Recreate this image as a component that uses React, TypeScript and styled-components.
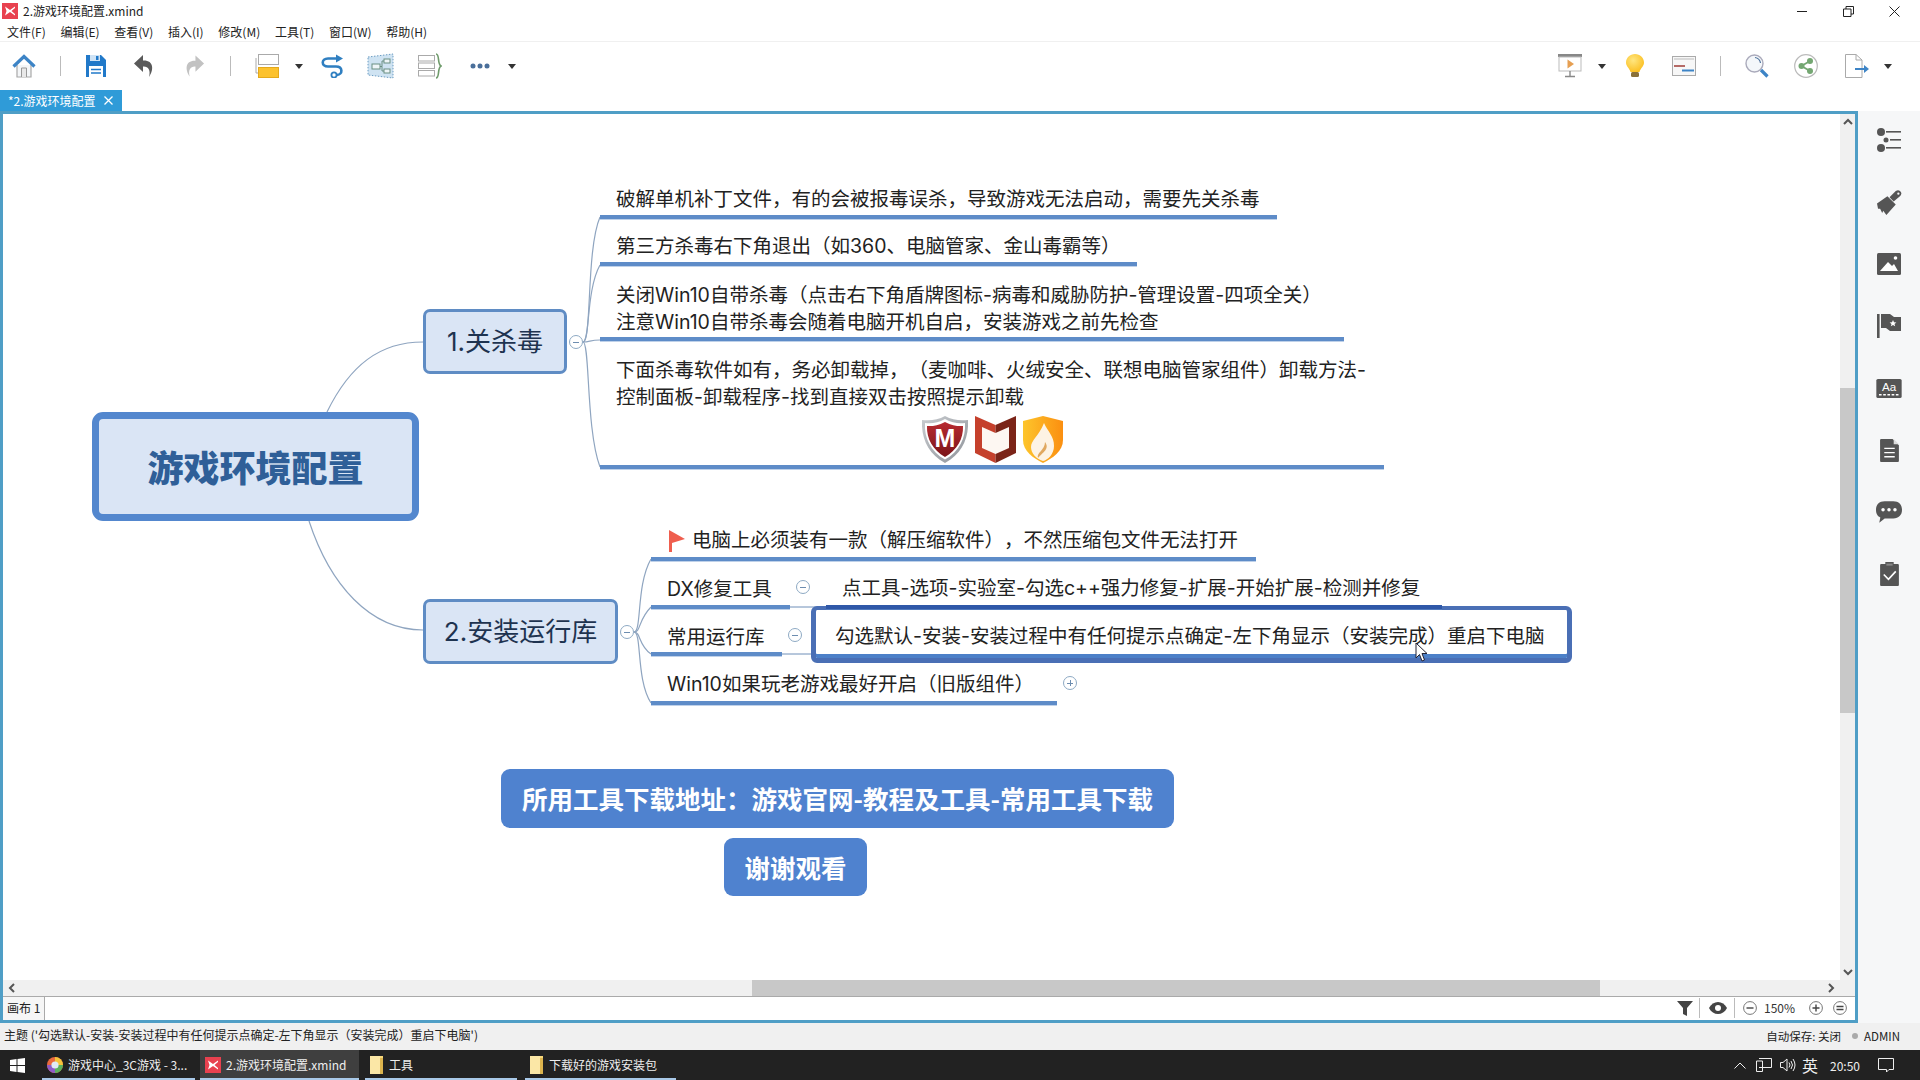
import React from "react";
import styled, { createGlobalStyle, css } from "styled-components";

const Global = createGlobalStyle`
  html, body { margin: 0; padding: 0; background: #fff; overflow: hidden; }
  body { font-family: "Noto Sans CJK SC", "Noto Sans", sans-serif; text-spacing-trim: space-all; }
  * { box-sizing: border-box; }
  svg { display: block; flex: none; }
`;
const MAP_FONT = `"Inter", "Noto Sans CJK SC", sans-serif`;

const Shell = styled.div`
  width: 1920px; height: 1080px; display: flex; flex-direction: column; background: #fff; overflow: hidden;
`;
const TitleBar = styled.div`
  height: 22px; display: flex; align-items: center; padding: 0 0 0 2px; flex: none;
`;
const TitleText = styled.span`
  font-size: 12px; line-height: 20px; color: #222; margin-left: 5px;
`;
const WindowControls = styled.div`
  margin-left: auto; display: flex; align-items: center; gap: 35px; padding-right: 20px;
`;
const MenuBar = styled.div`
  height: 20px; display: flex; align-items: center; gap: 14.7px; padding: 0 0 0 7px; flex: none; border-bottom: 1px solid #f0f0f0;
`;
const MenuItem = styled.span`
  font-size: 12px; line-height: 18px; color: #222;
`;
const Toolbar = styled.div`
  height: 48px; flex: none; display: flex; align-items: center; padding: 0 28px 0 12px;
`;
const ToolSvg = styled.svg<{ $gap?: number }>`
  margin-left: ${p => p.$gap ?? 0}px;
`;
const ToolSep = styled.div<{ $gap: number }>`
  width: 1px; height: 20px; background: #bbb; margin-left: ${p => p.$gap}px;
`;
const Caret = styled.div<{ $gap: number }>`
  width: 0; height: 0; margin-left: ${p => p.$gap}px;
  border-left: 4px solid transparent; border-right: 4px solid transparent; border-top: 5px solid #333;
`;
const ToolSpacer = styled.div`flex: 1;`;
const TabStrip = styled.div`
  height: 21px; flex: none; display: flex;
`;
const Tab = styled.div`
  width: 122px; height: 21px; background: #2f9bd8; color: #fff; font-size: 12px; line-height: 21px;
  padding-left: 8px; display: flex; align-items: center; justify-content: space-between; padding-right: 9px;
`;
const Main = styled.div`
  flex: 1; display: flex; min-height: 0;
`;
const Frame = styled.div`
  width: 1858px; height: 912px; border: 3px solid #4f9ec6; display: flex; flex-direction: column; background: #fff;
`;
const CanvasRow = styled.div`
  height: 866px; display: flex; flex: none;
`;
const Canvas = styled.div`
  position: relative; flex: 1; overflow: hidden; background: #fff;
`;
const VScroll = styled.div`
  width: 15px; display: flex; flex-direction: column; align-items: center; background: #f0f0f0; position: relative;
`;
const VThumb = styled.div`
  width: 15px; height: 325px; margin-top: 258px; background: #c8c8c8; flex: none;
`;
const ScrollArrow = styled.svg`
  margin: 4px 0;
`;
const VBottomArrow = styled(ScrollArrow)`
  margin-top: auto;
`;
const HScroll = styled.div`
  height: 17px; flex: none; display: flex; align-items: center; background: #f0f0f0; padding: 0 20px 0 5px;
  border-bottom: 1px solid #aaa;
`;
const HThumb = styled.div`
  width: 848px; height: 16px; background: #c8c8c8; margin-left: 736px;
`;
const HRight = styled.div`
  margin-left: auto;
`;
const SheetBar = styled.div`
  flex: 1; display: flex; align-items: center; background: #fff; padding: 0 8px 2px 0;
`;
const SheetTab = styled.div`
  width: 42px; height: 23px; font-size: 12px; line-height: 21px; color: #222; padding-left: 4px; border-right: 1px solid #aaa;
  background: #f6f6f6; margin-bottom: -2px;
`;
const ZoomText = styled.span`
  font-size: 12px; line-height: 16px; color: #333; margin-left: 7px; width: 38px;
`;
const Sidebar = styled.div`
  width: 62px; flex: none; height: 912px; display: flex; flex-direction: column; align-items: center; gap: 38px; padding-top: 17px;
  background: #f6f7f8;
`;
const SideSlot = styled.div`
  width: 26px; height: 24px; display: flex; align-items: center; justify-content: center;
`;
const StatusBar = styled.div`
  height: 27px; flex: none; background: #f0f0f0; display: flex; align-items: center; padding: 0 20px 2px 4px; font-size: 12px; color: #222;
`;
const StatusLeft = styled.span`
  line-height: 20px; margin-bottom: 2px;
`;
const StatusRight = styled.div`
  margin-left: auto; display: flex; align-items: center; gap: 6px; line-height: 20px; font-size: 11.5px;
`;
const StatusDot = styled.span`
  width: 6px; height: 6px; border-radius: 50%; background: #aaa; margin-left: 5px;
`;
const Taskbar = styled.div`
  height: 30px; flex: none; background: #222; display: flex; align-items: stretch; color: #eee; font-size: 12px;
`;
const StartCell = styled.div`
  width: 42px; display: flex; align-items: center; justify-content: center; padding-right: 7px;
`;
const TaskItem = styled.div<{ $w: number; $active?: boolean; $gap?: number }>`
  width: ${p => p.$w}px; margin-left: ${p => p.$gap ?? 0}px; display: flex; align-items: center; gap: 5px; padding-left: 5px;
  background: ${p => (p.$active ? "#3f3f3f" : "transparent")};
  border-bottom: 2px solid #a9c9e8; line-height: 28px; white-space: nowrap; padding-top: 1px;
`;
const Tray = styled.div`
  margin-left: auto; display: flex; align-items: center; padding-right: 26px;
`;
const TrayText = styled.span<{ $gap: number; $size: number }>`
  font-size: ${p => p.$size}px; margin-left: ${p => p.$gap}px; color: #eee;
`;
const TrayIcon = styled.svg<{ $gap: number }>`
  margin-left: ${p => p.$gap}px;
`;

/* ---- free canvas: nodes of the mind map ---- */
const OX = 3;
const OY = 114;
const place = css<{ $x: number; $y: number }>`
  position: absolute; left: ${p => p.$x - OX}px; top: ${p => p.$y - OY}px;
`;
const Wires = styled.svg`
  position: absolute; left: ${-OX}px; top: ${-OY}px; pointer-events: none;
`;
const RootTopic = styled.div<{ $x: number; $y: number }>`
  ${place}
  width: 327px; height: 109px; background: #dae5f5; border: 7px solid #5387ce; border-radius: 11px;
  display: flex; align-items: center; justify-content: center; padding-bottom: 2px;
  font-size: 36px; font-weight: 900; color: #2f5f98; line-height: 44px;
`;
const MainTopic = styled.div<{ $x: number; $y: number; $w: number }>`
  ${place}
  width: ${p => p.$w}px; height: 65px; background: #dae5f5; border: 3.5px solid #5f8cc4; border-radius: 7px;
  display: flex; align-items: center; justify-content: center;
  font-family: ${MAP_FONT}; font-size: 26px; color: #1e3350; line-height: 34px;
`;
const SubTopic = styled.div<{ $x: number; $y: number; $w: number; $h: number; $pad?: number; $dark?: boolean }>`
  ${place}
  width: ${p => p.$w}px; height: ${p => p.$h}px;
  border-bottom: 4px solid ${p => (p.$dark ? "#2f58a8" : "#5e8cc8")};
  box-shadow: 0 1px 0 rgba(94, 140, 200, 0.4);
  padding-left: ${p => p.$pad ?? 16}px; padding-top: 3px;
  display: flex; align-items: center;
  font-family: ${MAP_FONT}; font-size: 19.5px; line-height: 27px; color: #222; white-space: nowrap;
`;
const SubBlock = styled.div<{ $x: number; $y: number; $w: number; $h: number }>`
  ${place}
  width: ${p => p.$w}px; height: ${p => p.$h}px; border-bottom: 4px solid #5e8cc8;
  box-shadow: 0 1px 0 rgba(94, 140, 200, 0.4);
  display: flex; flex-direction: column;
  font-family: ${MAP_FONT}; font-size: 19.5px; line-height: 27px; color: #222; white-space: nowrap;
`;
const BlockText = styled.div`
  padding: 2px 0 0 16px;
`;
const LogoRow = styled.div`
  display: flex; justify-content: center; gap: 7px; margin-top: 5px;
`;
const SelectedTopic = styled.div<{ $x: number; $y: number }>`
  ${place}
  width: 761px; height: 57px; border: solid #4a6fb5; border-width: 4px 5px 5px 5px; border-radius: 6px;
  box-shadow: inset 0 -4px 0 #4c80c8;
  display: flex; align-items: center; padding: 4px 0 0 19px;
  font-family: ${MAP_FONT}; font-size: 19.5px; line-height: 27px; color: #222; white-space: nowrap;
`;
const Flag = styled.svg`
  margin-right: 6px; margin-left: -1px;
`;
const Fold = styled.div<{ $x: number; $y: number; $plus?: boolean }>`
  ${place}
  width: 14px; height: 14px; margin: -7px 0 0 -7px; border-radius: 50%; background: #fff; border: 1px solid #8eaac4;
  &::before { content: ""; position: absolute; left: 3px; top: 5.5px; width: 6px; height: 1px; background: #6d8db0; }
  ${p => p.$plus && css`
    &::after { content: ""; position: absolute; left: 5.5px; top: 3px; width: 1px; height: 6px; background: #6d8db0; }
  `}
`;
const Banner = styled.div<{ $x: number; $y: number; $w: number; $h: number }>`
  ${place}
  width: ${p => p.$w}px; height: ${p => p.$h}px; background: #4f82cf; border-radius: 9px;
  display: flex; align-items: center; justify-content: center; padding-bottom: 1px;
  font-size: 25.5px; font-weight: 700; line-height: 34px; color: #fff; white-space: nowrap;
`;
const Cursor = styled.svg<{ $x: number; $y: number }>`
  ${place}
`;

const XLogo = ({ s = 16 }: { s?: number }) => (
  <svg width={s} height={s} viewBox="0 0 16 16">
    <rect width="16" height="16" fill="#e8414f" />
    <path d="M3 3.5 L8 7 L13 3.5 L13 5 L9.5 8 L13 11 L13 12.5 L8 9 L3 12.5 L4.5 8 Z" fill="#fff" />
  </svg>
);
const Folder = () => (
  <svg width="14" height="20" viewBox="0 0 14 20">
    <path d="M0 1 H9 L13 1 V19 H0 Z" fill="#f7d77a" />
    <path d="M0 1 H10 V19 H0 Z" fill="#fbe7a6" />
    <rect x="10" y="3" width="3" height="16" fill="#dcb44e" />
  </svg>
);
const Chev = ({ d }: { d: string }) => (
  <ScrollArrow width="10" height="8" viewBox="0 0 10 8">
    <path d={d} fill="none" stroke="#555" strokeWidth="2" />
  </ScrollArrow>
);

const wirePaths = [
  "M327 412 C350 365 380 342 423 342",
  "M309 521 C330 585 370 630 423 630",
  "M583 342 C592 342 586 250 600 217",
  "M583 342 C590 342 586 290 600 265",
  "M583 342 C590 342 590 340 600 340",
  "M583 342 C590 342 586 430 600 467",
  "M634 632 C642 632 636 585 651 559",
  "M634 632 C641 632 638 620 651 607",
  "M634 632 C641 632 638 645 651 654",
  "M634 632 C642 632 636 680 651 703",
];

export default function App() {
  return (
    <Shell>
      <Global />
      <TitleBar>
        <XLogo />
        <TitleText>2.游戏环境配置.xmind</TitleText>
        <WindowControls>
          <svg width="11" height="11" viewBox="0 0 11 11"><path d="M0 5.5 H10" stroke="#222" strokeWidth="1" /></svg>
          <svg width="11" height="11" viewBox="0 0 11 11"><path d="M0.5 3 H8 V10.5 H0.5 Z M3 3 V0.5 H10.5 V8 H8" fill="none" stroke="#222" /></svg>
          <svg width="11" height="11" viewBox="0 0 11 11"><path d="M0.5 0.5 L10.5 10.5 M10.5 0.5 L0.5 10.5" stroke="#222" /></svg>
        </WindowControls>
      </TitleBar>
      <MenuBar>
        {["文件(F)", "编辑(E)", "查看(V)", "插入(I)", "修改(M)", "工具(T)", "窗口(W)", "帮助(H)"].map(m => (
          <MenuItem key={m}>{m}</MenuItem>
        ))}
      </MenuBar>
      <Toolbar>
        <ToolSvg width="24" height="24" viewBox="0 0 24 24">
          <path d="M5 11 V23 H19 V11" fill="#f4f6f8" stroke="#a8a8a8" strokeWidth="1.2" />
          <path d="M9.5 23 V14 H14.5 V23" fill="#e8e8e8" stroke="#999" />
          <path d="M1.5 12.5 L12 2.5 L22.5 12.5" fill="none" stroke="#3d84c6" strokeWidth="3.2" />
        </ToolSvg>
        <ToolSep $gap={24} />
        <ToolSvg $gap={24} width="22" height="24" viewBox="0 0 22 24">
          <path d="M1 1 H16 L21 6 V23 H1 Z" fill="#2179c9" />
          <rect x="5" y="1" width="10" height="6" fill="#cfe3f5" />
          <rect x="11" y="2" width="2.5" height="4" fill="#2179c9" />
          <rect x="4" y="12" width="14" height="11" fill="#fff" />
          <path d="M6 15.5 H16 M6 19 H16" stroke="#2179c9" strokeWidth="1.4" />
        </ToolSvg>
        <ToolSvg $gap={26} width="22" height="24" viewBox="0 0 22 24">
          <path d="M10 1 L1 9.5 L10 18 V12.5 C15 12 18 16 16 23 C21 16 21 6 10 6.5 Z" fill="#5a5a5a" />
        </ToolSvg>
        <ToolSvg $gap={29} width="21" height="24" viewBox="0 0 22 24">
          <path d="M12 1 L21 9.5 L12 18 V12.5 C7 12 4 16 6 23 C1 16 1 6 12 6.5 Z" fill="#c2c2c2" />
        </ToolSvg>
        <ToolSep $gap={25} />
        <ToolSvg $gap={24} width="24" height="24" viewBox="0 0 24 24">
          <path d="M1 4 V19 H4" fill="none" stroke="#aaa" />
          <rect x="3.5" y="0.5" width="20" height="10" fill="#fff" stroke="#aaa" />
          <rect x="3.5" y="13.5" width="20" height="10" fill="#fcc22e" stroke="#e4a91c" />
        </ToolSvg>
        <Caret $gap={16} />
        <ToolSvg $gap={17} width="24" height="24" viewBox="0 0 24 24">
          <path d="M17 4.5 H8 C1 4.5 1 12.5 8 12.5 H16 C23 12.5 23 20.5 17 21" fill="none" stroke="#2f7fc1" strokeWidth="2.6" />
          <path d="M16 0.5 L23 4.5 L16 8.5 Z" fill="#2f7fc1" />
          <circle cx="14" cy="21" r="2.6" fill="#fff" stroke="#2f7fc1" strokeWidth="1.8" />
        </ToolSvg>
        <ToolSvg $gap={23} width="27" height="26" viewBox="0 0 27 26">
          <path d="M1 4 L26 1 V25 L1 22 Z" fill="#cfe3f2" stroke="#6b9cc2" strokeDasharray="1.5 1.5" />
          <rect x="5" y="11" width="8" height="5" fill="#eef5f8" stroke="#6a8f82" />
          <rect x="17" y="6" width="6" height="4" fill="#eef5f8" stroke="#6a8f82" />
          <rect x="17" y="16" width="6" height="4" fill="#eef5f8" stroke="#6a8f82" />
          <path d="M13 13.5 H15 V8 H17 M15 13.5 V18 H17" fill="none" stroke="#6a8f82" />
        </ToolSvg>
        <ToolSvg $gap={23} width="25" height="26" viewBox="0 0 25 26">
          <rect x="1.5" y="2.5" width="16" height="5.5" fill="#fff" stroke="#aaa" />
          <rect x="1.5" y="10" width="16" height="5.5" fill="#fff" stroke="#aaa" />
          <rect x="1.5" y="17.5" width="16" height="5.5" fill="#fff" stroke="#aaa" />
          <path d="M19 1 C23 1 20 11 24 13 C20 15 23 25 19 25" fill="none" stroke="#6f9b6b" strokeWidth="1.6" />
        </ToolSvg>
        <ToolSvg $gap={28} width="20" height="6" viewBox="0 0 20 6">
          <circle cx="3" cy="3" r="2.5" fill="#4a6f9a" />
          <circle cx="10" cy="3" r="2.5" fill="#4a6f9a" />
          <circle cx="17" cy="3" r="2.5" fill="#4a6f9a" />
        </ToolSvg>
        <Caret $gap={18} />
        <ToolSpacer />
        <ToolSvg width="24" height="24" viewBox="0 0 24 24">
          <rect x="0" y="0" width="24" height="3" fill="#888" />
          <rect x="1" y="3" width="22" height="14" fill="#fff" stroke="#bbb" />
          <path d="M9.5 5.5 L16 10 L9.5 14.5 Z" fill="#e69f52" />
          <path d="M12 17 V22 M7 22.5 H17" stroke="#888" strokeWidth="1.4" />
        </ToolSvg>
        <Caret $gap={16} />
        <ToolSvg $gap={20} width="18" height="24" viewBox="0 0 18 24">
          <defs>
            <radialGradient id="bulb" cx="0.4" cy="0.35" r="0.7">
              <stop offset="0" stopColor="#ffe680" />
              <stop offset="1" stopColor="#fbbe1e" />
            </radialGradient>
          </defs>
          <path d="M9 0 C14 0 18 4 18 8.5 C18 12.5 14.5 14 13.5 18 H4.5 C3.5 14 0 12.5 0 8.5 C0 4 4 0 9 0 Z" fill="url(#bulb)" />
          <rect x="5" y="18" width="8" height="5" rx="1.5" fill="#8a7038" />
        </ToolSvg>
        <ToolSvg $gap={28} width="24" height="20" viewBox="0 0 24 20">
          <rect x="0.5" y="0.5" width="23" height="19" fill="#f7f7f7" stroke="#aaa" />
          <path d="M2 3 H22" stroke="#bbb" />
          <path d="M2 10 H13" stroke="#b56a66" strokeWidth="2" />
          <path d="M10 14.5 H22" stroke="#3d84c6" strokeWidth="2" />
        </ToolSvg>
        <ToolSep $gap={24} />
        <ToolSvg $gap={24} width="24" height="24" viewBox="0 0 24 24">
          <circle cx="9.5" cy="9.5" r="8.5" fill="#f4f7fa" stroke="#aab" strokeWidth="1.4" />
          <path d="M10 3.5 C13 4 15 6 15.5 9" fill="none" stroke="#4a6f9a" strokeWidth="1.2" />
          <path d="M16 16 L22.5 22.5" stroke="#3d84c6" strokeWidth="3.2" />
        </ToolSvg>
        <ToolSvg $gap={25} width="24" height="24" viewBox="0 0 24 24">
          <circle cx="12" cy="12" r="11.3" fill="#fff" stroke="#bbb" strokeWidth="1.2" />
          <path d="M16 7 L7.5 12 L16 17" fill="none" stroke="#74a772" strokeWidth="1.8" />
          <circle cx="16" cy="7" r="3" fill="#74a772" />
          <circle cx="7.5" cy="12" r="3" fill="#74a772" />
          <circle cx="16" cy="17" r="3" fill="#74a772" />
        </ToolSvg>
        <ToolSvg $gap={27} width="24" height="24" viewBox="0 0 24 24">
          <path d="M0.5 0.5 H11 L17 6 V23.5 H0.5 Z" fill="#fff" stroke="#aaa" />
          <path d="M11 0.5 V6 H17" fill="none" stroke="#aaa" />
          <path d="M10 15 H20" stroke="#3d84c6" strokeWidth="2" />
          <path d="M19 11 L24 15 L19 19 Z" fill="#3d84c6" />
        </ToolSvg>
        <Caret $gap={15} />
      </Toolbar>
      <TabStrip>
        <Tab>
          <span>*2.游戏环境配置</span>
          <svg width="9" height="9" viewBox="0 0 9 9"><path d="M0.5 0.5 L8.5 8.5 M8.5 0.5 L0.5 8.5" stroke="#fff" strokeWidth="1.3" /></svg>
        </Tab>
      </TabStrip>
      <Main>
        <Frame>
          <CanvasRow>
            <Canvas>
              <Wires width="1900" height="1000" viewBox="0 0 1900 1000">
                {wirePaths.map(d => (
                  <path key={d} d={d} fill="none" stroke="#8fa5c0" strokeWidth="1.2" />
                ))}
                <path d="M790 607 H826 M782 654 H811" stroke="#6e8fb8" strokeWidth="1" />
              </Wires>

              <RootTopic $x={92} $y={412}>游戏环境配置</RootTopic>
              <MainTopic $x={423} $y={309} $w={144}>1.关杀毒</MainTopic>
              <MainTopic $x={423} $y={599} $w={195}>2.安装运行库</MainTopic>
              <Fold $x={576} $y={342} />
              <Fold $x={627} $y={632} />

              <SubTopic $x={600} $y={180} $w={677} $h={39}>破解单机补丁文件，有的会被报毒误杀，导致游戏无法启动，需要先关杀毒</SubTopic>
              <SubTopic $x={600} $y={228} $w={537} $h={38}>第三方杀毒右下角退出（如360、电脑管家、金山毒霸等）</SubTopic>
              <SubTopic $x={600} $y={278} $w={744} $h={63}>
                <div>
                  关闭Win10自带杀毒（点击右下角盾牌图标-病毒和威胁防护-管理设置-四项全关）<br />
                  注意Win10自带杀毒会随着电脑开机自启，安装游戏之前先检查
                </div>
              </SubTopic>
              <SubBlock $x={600} $y={355} $w={784} $h={114}>
                <BlockText>
                  下面杀毒软件如有，务必卸载掉，（麦咖啡、火绒安全、联想电脑管家组件）卸载方法-<br />
                  控制面板-卸载程序-找到直接双击按照提示卸载
                </BlockText>
                <LogoRow>
                  <svg width="46" height="47" viewBox="0 0 46 47">
                    <defs>
                      <linearGradient id="sv" x1="0" y1="0" x2="1" y2="1">
                        <stop offset="0" stopColor="#c9ccd0" />
                        <stop offset="1" stopColor="#8f949a" />
                      </linearGradient>
                      <linearGradient id="rd" x1="0" y1="0" x2="0" y2="1">
                        <stop offset="0" stopColor="#b72a30" />
                        <stop offset="1" stopColor="#7b1519" />
                      </linearGradient>
                    </defs>
                    <path d="M23 0 C30 4 38 5 46 4 C47 22 40 38 23 47 C6 38 -1 22 0 4 C8 5 16 4 23 0 Z" fill="url(#sv)" />
                    <path d="M23 3 C30 7 37 8 43 7 C44 22 37 36 23 43.5 C9 36 2 22 3 7 C9 8 16 7 23 3 Z" fill="#fff" />
                    <path d="M23 6 C30 9.5 36 10.5 41 10 C41.5 23 35 34 23 41 C11 34 4.5 23 5 10 C10 10.5 16 9.5 23 6 Z" fill="url(#rd)" />
                    <text x="23" y="31" textAnchor="middle" fontFamily="Liberation Sans" fontWeight="700" fontSize="25" fill="#fff">M</text>
                  </svg>
                  <svg width="41" height="47" viewBox="0 0 41 47">
                    <path d="M0 0 L20.5 9 V47 L0 37 Z" fill="#c5402c" />
                    <path d="M41 0 L20.5 9 V47 L41 37 Z" fill="#7b2418" />
                    <path d="M7 11 L20.5 17 L34 11 V32 L20.5 38 L7 32 Z" fill="#fdf7f2" />
                  </svg>
                  <svg width="40" height="47" viewBox="0 0 40 47">
                    <defs>
                      <linearGradient id="hr" x1="0" y1="0" x2="1" y2="0">
                        <stop offset="0" stopColor="#fdc52c" />
                        <stop offset="1" stopColor="#fb8f10" />
                      </linearGradient>
                    </defs>
                    <path d="M20 0 L40 5 V24 C40 35 30 42 20 47 C10 42 0 35 0 24 V5 Z" fill="url(#hr)" />
                    <path d="M21 7 C25 16 31 20 31 30 C31 38 25 44 20 45 C13 43 8 37 8 31 C8 24 16 20 21 7 Z" fill="#fdf3e4" />
                    <path d="M22 26 C27 33 20 36 15 42 C13 37 22 34 22 26 Z" fill="#e0a860" />
                  </svg>
                </LogoRow>
              </SubBlock>

              <SubTopic $x={651} $y={521} $w={605} $h={40} $pad={18}>
                <Flag width="18" height="22" viewBox="0 0 18 22">
                  <path d="M1 0 L17 9 L4 13 V22 H1 Z" fill="#ef5e4e" />
                </Flag>
                电脑上必须装有一款（解压缩软件），不然压缩包文件无法打开
              </SubTopic>
              <SubTopic $x={651} $y={571} $w={139} $h={38}>DX修复工具</SubTopic>
              <Fold $x={803} $y={587} />
              <SelectedTopic $x={811} $y={606}>勾选默认-安装-安装过程中有任何提示点确定-左下角显示（安装完成）重启下电脑</SelectedTopic>
              <SubTopic $x={826} $y={569} $w={616} $h={40} $dark $pad={16}>点工具-选项-实验室-勾选c++强力修复-扩展-开始扩展-检测并修复</SubTopic>
              <SubTopic $x={651} $y={619} $w={131} $h={37}>常用运行库</SubTopic>
              <Fold $x={795} $y={635} />
              <SubTopic $x={651} $y={665} $w={406} $h={40}>Win10如果玩老游戏最好开启（旧版组件）</SubTopic>
              <Fold $x={1070} $y={683} $plus />

              <Banner $x={501} $y={769} $w={673} $h={59}>所用工具下载地址：游戏官网-教程及工具-常用工具下载</Banner>
              <Banner $x={724} $y={838} $w={143} $h={58}>谢谢观看</Banner>

              <Cursor $x={1415} $y={642} width="13" height="21" viewBox="0 0 13 21">
                <path d="M1 1 V16 L4.5 12.5 L7 19 L9.5 18 L7 11.5 H12 Z" fill="#fff" stroke="#223" strokeWidth="1" />
              </Cursor>
            </Canvas>
            <VScroll>
              <Chev d="M1 6 L5 2 L9 6" />
              <VThumb />
              <VBottomArrow width="10" height="8" viewBox="0 0 10 8">
                <path d="M1 2 L5 6 L9 2" fill="none" stroke="#555" strokeWidth="2" />
              </VBottomArrow>
            </VScroll>
          </CanvasRow>
          <HScroll>
            <svg width="8" height="10" viewBox="0 0 8 10"><path d="M6 1 L2 5 L6 9" fill="none" stroke="#555" strokeWidth="2" /></svg>
            <HThumb />
            <HRight>
              <svg width="8" height="10" viewBox="0 0 8 10"><path d="M2 1 L6 5 L2 9" fill="none" stroke="#555" strokeWidth="2" /></svg>
            </HRight>
          </HScroll>
          <SheetBar>
            <SheetTab>画布 1</SheetTab>
            <ToolSpacer />
            <svg width="16" height="16" viewBox="0 0 16 16"><path d="M0 1 H16 L10 8 V16 L6 14 V8 Z" fill="#444" /></svg>
            <ToolSep $gap={6} />
            <ToolSvg $gap={9} width="18" height="12" viewBox="0 0 18 12">
              <path d="M0 6 C4 -2 14 -2 18 6 C14 14 4 14 0 6 Z" fill="#444" />
              <circle cx="9" cy="6" r="3" fill="#fff" />
            </ToolSvg>
            <ToolSep $gap={7} />
            <ToolSvg $gap={8} width="14" height="14" viewBox="0 0 14 14">
              <circle cx="7" cy="7" r="6.4" fill="#fff" stroke="#777" />
              <path d="M3.5 7 H10.5" stroke="#444" strokeWidth="1.4" />
            </ToolSvg>
            <ZoomText>150%</ZoomText>
            <ToolSvg $gap={7} width="14" height="14" viewBox="0 0 14 14">
              <circle cx="7" cy="7" r="6.4" fill="#fff" stroke="#777" />
              <path d="M3.5 7 H10.5 M7 3.5 V10.5" stroke="#444" strokeWidth="1.4" />
            </ToolSvg>
            <ToolSvg $gap={10} width="14" height="14" viewBox="0 0 14 14">
              <circle cx="7" cy="7" r="6.4" fill="#fff" stroke="#777" />
              <path d="M3.5 5.5 H10.5 M3.5 8.5 H10.5" stroke="#444" strokeWidth="1.4" />
            </ToolSvg>
          </SheetBar>
        </Frame>
        <Sidebar>
          <SideSlot>
            <svg width="24" height="24" viewBox="0 0 24 24" fill="#555">
              <circle cx="4" cy="4" r="4" /><circle cx="9" cy="12" r="2.5" /><circle cx="4" cy="20" r="4" />
              <rect x="9" y="3" width="15" height="1.6" /><rect x="13" y="11" width="11" height="1.6" /><rect x="9" y="19" width="15" height="1.6" />
            </svg>
          </SideSlot>
          <SideSlot>
            <svg width="25" height="25" viewBox="0 0 24 24" fill="#555">
              <path d="M0 13 L10 6 L18 14 L9 24 L6 20 L5 22 L3 18 L1 18 Z" />
              <path d="M12 7 L18 1 Q21 -1 23 2 Q24 4 22 6 L16 11 Z" />
              <circle cx="20.5" cy="3.5" r="1.1" fill="#f6f7f8" />
            </svg>
          </SideSlot>
          <SideSlot>
            <svg width="24" height="22" viewBox="0 0 24 22">
              <rect width="24" height="22" rx="1.5" fill="#555" />
              <path d="M3 18 L11 9 L15 13 L17 11 L21 18 Z" fill="#fff" />
              <circle cx="18.5" cy="5" r="1.8" fill="#fff" />
            </svg>
          </SideSlot>
          <SideSlot>
            <svg width="24" height="24" viewBox="0 0 24 24" fill="#555">
              <rect x="0" y="0" width="2.6" height="24" />
              <path d="M4 0 H13 L17 3 H24 V17 H13 L9 14 H4 Z" />
              <path d="M16 6 L17 8.3 L19.4 8.4 L17.5 9.9 L18.2 12.2 L16 10.9 L13.8 12.2 L14.5 9.9 L12.6 8.4 L15 8.3 Z" fill="#fff" />
            </svg>
          </SideSlot>
          <SideSlot>
            <svg width="26" height="19" viewBox="0 0 24 18">
              <rect width="24" height="18" rx="1.5" fill="#555" />
              <text x="12" y="11.5" textAnchor="middle" fontFamily="Liberation Sans" fontSize="11" fill="#fff">Aa</text>
              <path d="M2.5 15 H21.5" stroke="#fff" strokeWidth="1.4" strokeDasharray="2.5 1.5" />
            </svg>
          </SideSlot>
          <SideSlot>
            <svg width="19" height="23" viewBox="0 0 18 22">
              <path d="M1 0 H12 L18 6 V21 Q18 22 17 22 H1 Q0 22 0 21 V1 Q0 0 1 0 Z" fill="#555" />
              <path d="M13 0 L18 5 H13 Z" fill="#ddd" />
              <path d="M4 9 H14 M4 13 H14 M4 17 H14" stroke="#fff" strokeWidth="1.3" />
            </svg>
          </SideSlot>
          <SideSlot>
            <svg width="26" height="22" viewBox="0 0 24 20">
              <path d="M8 0 H16 C21 0 24 3 24 8 C24 13 21 16 16 16 H8 L3 20 L4 15 C1 14 0 11 0 8 C0 3 3 0 8 0 Z" fill="#555" />
              <circle cx="6.5" cy="8" r="1.6" fill="#fff" /><circle cx="12" cy="8" r="1.6" fill="#fff" /><circle cx="17.5" cy="8" r="1.6" fill="#fff" />
            </svg>
          </SideSlot>
          <SideSlot>
            <svg width="19" height="24" viewBox="0 0 18 23">
              <path d="M1 2 H5 V0 H13 V2 H17 Q18 2 18 3 V22 Q18 23 17 23 H1 Q0 23 0 22 V3 Q0 2 1 2 Z" fill="#555" />
              <path d="M6 1.5 H12 V3.5 H6 Z" fill="#888" />
              <path d="M3.5 12 L8 16.5 L15 9" fill="none" stroke="#fff" strokeWidth="1.6" />
            </svg>
          </SideSlot>
        </Sidebar>
      </Main>
      <StatusBar>
        <StatusLeft>主题 ('勾选默认-安装-安装过程中有任何提示点确定-左下角显示（安装完成）重启下电脑')</StatusLeft>
        <StatusRight>
          <span>自动保存: 关闭</span>
          <StatusDot />
          <span>ADMIN</span>
        </StatusRight>
      </StatusBar>
      <Taskbar>
        <StartCell>
          <svg width="15" height="15" viewBox="0 0 15 15" fill="#fff">
            <path d="M0 2 L6.5 1 V7 H0 Z M7.5 0.9 L15 0 V7 H7.5 Z M0 8 H6.5 V14 L0 13 Z M7.5 8 H15 V15 L7.5 14.1 Z" />
          </svg>
        </StartCell>
        <TaskItem $w={153}>
          <svg width="16" height="16" viewBox="0 0 16 16">
            <circle cx="8" cy="8" r="8" fill="#ea6a3d" />
            <path d="M8 0 A8 8 0 0 1 16 8 L8 8 Z" fill="#f5c33b" />
            <path d="M16 8 A8 8 0 0 1 8 16 L8 8 Z" fill="#5bb15d" />
            <path d="M8 16 A8 8 0 0 1 0 8 L8 8 Z" fill="#8f5cc8" />
            <circle cx="8" cy="8" r="3.6" fill="#dfeaf6" />
          </svg>
          游戏中心_3C游戏 - 3...
        </TaskItem>
        <TaskItem $w={159} $gap={5} $active>
          <XLogo s={16} />
          2.游戏环境配置.xmind
        </TaskItem>
        <TaskItem $w={152} $gap={6}>
          <Folder />
          工具
        </TaskItem>
        <TaskItem $w={151} $gap={8}>
          <Folder />
          下载好的游戏安装包
        </TaskItem>
        <Tray>
          <TrayIcon $gap={0} width="12" height="7" viewBox="0 0 12 7"><path d="M0.5 6.5 L6 1 L11.5 6.5" fill="none" stroke="#eee" /></TrayIcon>
          <TrayIcon $gap={10} width="16" height="14" viewBox="0 0 16 14"><path d="M3 0.5 H15.5 V9.5 H3 M0.5 3 H6.5 V13.5 H0.5 Z" fill="none" stroke="#eee" /></TrayIcon>
          <TrayIcon $gap={8} width="16" height="14" viewBox="0 0 16 14"><path d="M0.5 4.5 H3 L7 1 V13 L3 9.5 H0.5 Z M9 4.5 Q11 7 9 9.5 M11 3 Q14 7 11 11 M13 1 Q17 7 13 13" fill="none" stroke="#eee" /></TrayIcon>
          <TrayText $gap={6} $size={16}>英</TrayText>
          <TrayText $gap={12} $size={12}>20:50</TrayText>
          <TrayIcon $gap={18} width="16" height="15" viewBox="0 0 16 15"><path d="M0.5 0.5 H15.5 V11.5 H11 L8.5 14 V11.5 H0.5 Z" fill="none" stroke="#eee" /></TrayIcon>
        </Tray>
      </Taskbar>
    </Shell>
  );
}
